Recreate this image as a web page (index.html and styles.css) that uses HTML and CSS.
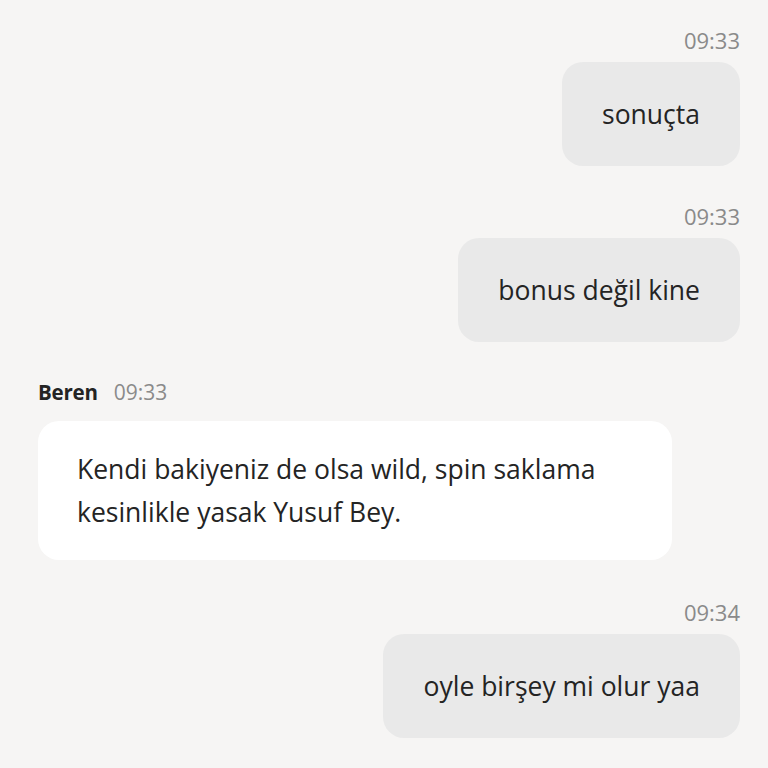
FILE: index.html
```html
<!DOCTYPE html>
<html lang="tr">
<head>
<meta charset="utf-8">
<link rel="stylesheet" href="styles.css">
</head>
<body>
<div class="chat">
  <div class="msg mine">
    <div class="meta"><span class="time">09:33</span></div>
    <div class="bubble">sonuçta</div>
  </div>
  <div class="msg mine">
    <div class="meta"><span class="time">09:33</span></div>
    <div class="bubble">bonus değil kine</div>
  </div>
  <div class="msg theirs">
    <div class="meta"><span class="name">Beren</span><span class="time">09:33</span></div>
    <div class="bubble">Kendi bakiyeniz de olsa wild, spin saklama<br>kesinlikle yasak Yusuf Bey.</div>
  </div>
  <div class="msg mine last">
    <div class="meta"><span class="time">09:34</span></div>
    <div class="bubble">oyle birşey mi olur yaa</div>
  </div>
</div>
</body>
</html>
```

FILE: styles.css
```css
html, body {
  margin: 0;
  padding: 0;
  background: #f6f5f4;
}
body {
  font-family: "Open Sans", "Noto Sans", sans-serif;
  color: #242424;
}
.chat {
  display: flex;
  flex-direction: column;
  padding: 27px 28px 0 38px;
}
.msg {
  display: flex;
  flex-direction: column;
}
.msg + .msg {
  margin-top: 37px;
}
.msg.last {
  margin-top: 39px;
}
.mine {
  align-items: flex-end;
}
.theirs {
  align-items: flex-start;
}
.meta {
  display: flex;
  align-items: baseline;
  gap: 16px;
  font-size: 22px;
  line-height: 26px;
  height: 26px;
}
.time {
  color: #8a8a8a;
}
.name {
  font-weight: 700;
  font-size: 20.5px;
  color: #242424;
  letter-spacing: -0.2px;
}
.theirs .time {
  font-size: 21px;
}
.mine .meta {
  margin-bottom: 9px;
}
.theirs .meta {
  margin-bottom: 16px;
}
.bubble {
  font-size: 26.5px;
  line-height: 43px;
  border-radius: 21px;
}
.mine .bubble {
  background: #e9e9e9;
  padding: 31px 40px 30px;
}
.theirs .bubble {
  background: #ffffff;
  padding: 27px 39px 26px;
  width: 556px;
}
```
